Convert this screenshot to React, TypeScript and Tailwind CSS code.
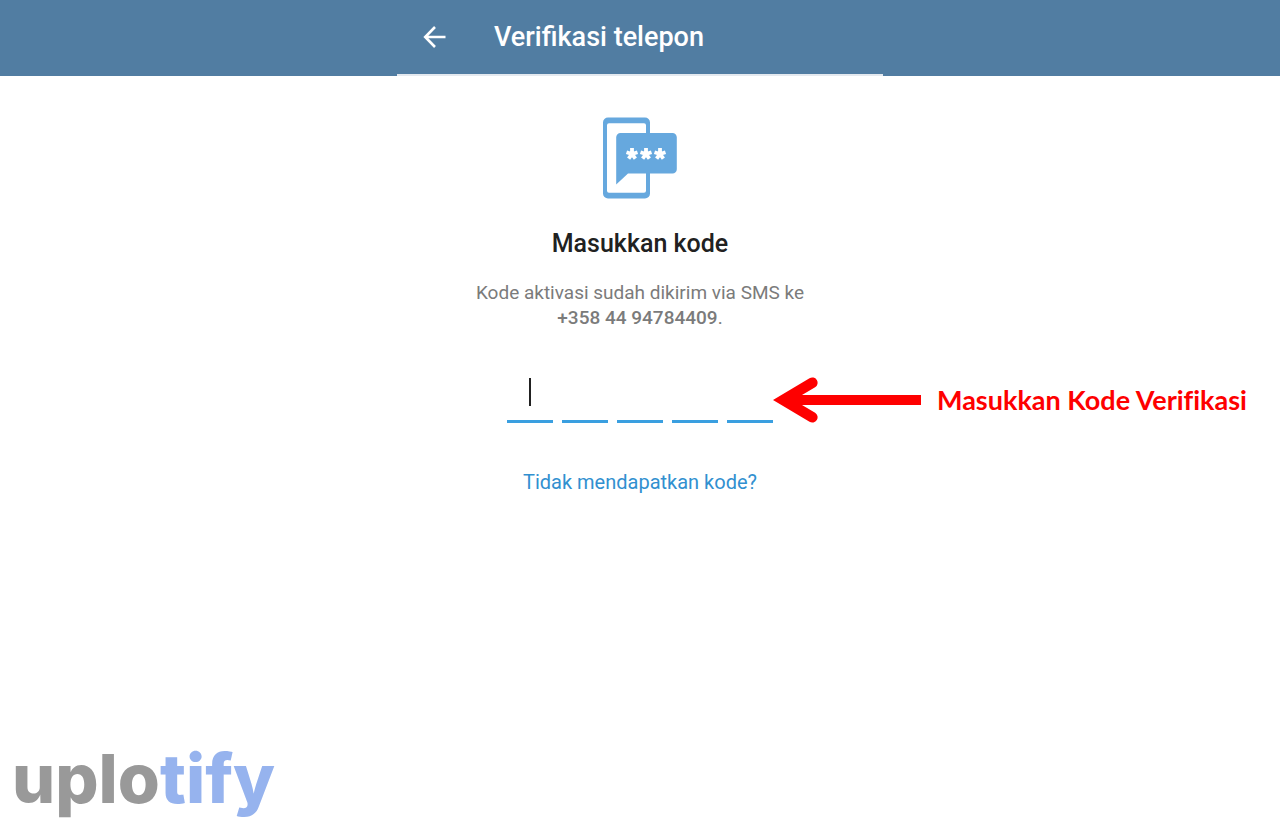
const starCenters = [632, 646, 660];

function BackIcon() {
  return (
    <svg viewBox="0 0 24 24" className="size-6" fill="none" stroke="currentColor" strokeWidth="2.6" aria-hidden="true">
      <path d="M23.500 12H4M13 2 3.200 12l9.800 10" />
    </svg>
  );
}

function PhoneMessageIcon() {
  return (
    <svg viewBox="603 117 74 82" className="h-[82px] w-[74px]" aria-hidden="true">
      <path
        d="M608 117.500h37a5 5 0 0 1 5 5v71a5 5 0 0 1-5 5h-37a5 5 0 0 1-5-5v-71a5 5 0 0 1 5-5Zm1 5.800a2 2 0 0 0-2 2v65.500a2 2 0 0 0 2 2h35a2 2 0 0 0 2-2v-65.500a2 2 0 0 0-2-2Z"
        fill="#66a8de"
        fillRule="evenodd"
      />
      <path d="M620.500 133h52a4.300 4.300 0 0 1 4.300 4.300v32a4.300 4.300 0 0 1-4.300 4.300H628l-11.800 11V137.300a4.300 4.300 0 0 1 4.300-4.300Z" fill="#66a8de" />
      <g stroke="#fff" strokeWidth="3.800">
        {starCenters.map((x) => (
          <path
            key={x}
            d={`M${x} 154v-6M${x} 154l-5.500-1.700M${x} 154l5.500-1.700M${x} 154l-3.400 4.700M${x} 154l3.400 4.700`}
          />
        ))}
      </g>
    </svg>
  );
}

function PointerArrow() {
  return (
    <svg viewBox="0 0 148 46" className="h-[46px] w-[148px] shrink-0" aria-hidden="true">
      <path
        d="M0 23 36.500 1.200a5.300 5.300 0 0 1 5.600 9L29 18h119v10H29l13.100 7.800a5.300 5.300 0 0 1-5.600 9Z"
        fill="#fe0000"
      />
    </svg>
  );
}

export default function App() {
  return (
    <div className="flex min-h-screen flex-col bg-white font-['Roboto',sans-serif]">
      <header className="flex justify-center bg-[#517da2]">
        <div className="flex h-[76px] w-full max-w-[486px] items-center gap-12 border-b-2 border-[#e4e9ef] pl-[25px] text-white">
          <button type="button" aria-label="Kembali">
            <BackIcon />
          </button>
          <h1 className="text-[27px] leading-8 font-medium">Verifikasi telepon</h1>
        </div>
      </header>

      <main className="flex flex-1 flex-col items-center pt-[41px]">
        <PhoneMessageIcon />
        <h2 className="mt-[29px] text-[25px] leading-8 font-medium text-[#212121]">Masukkan kode</h2>
        <p className="mt-5 text-center text-[19px] leading-[25px] text-[#7b7b7b]">
          Kode aktivasi sudah dikirim via SMS ke
          <br />
          <strong className="font-medium">+358 44 94784409</strong>.
        </p>

        <div className="mt-[46px] grid w-full grid-cols-[1fr_auto_1fr] items-center">
          <div role="group" aria-label="Kode verifikasi" className="relative col-start-2 flex gap-[9px]">
            {[1, 2, 3, 4, 5].map((digit) => (
              <input
                key={digit}
                type="text"
                inputMode="numeric"
                maxLength={1}
                aria-label={`Digit ${digit}`}
                className="h-[47px] w-[46px] border-b-3 border-[#3a9fe0] bg-transparent text-center text-2xl text-[#212121] outline-none"
              />
            ))}
            <span className="absolute top-[2px] left-[22px] h-7 w-[2px] bg-[#212121]" />
          </div>
          <div className="flex items-center gap-4 whitespace-nowrap text-[#fe0000]">
            <PointerArrow />
            <span className="font-['Lato',sans-serif] text-[27px] leading-8 font-bold [font-variant-ligatures:none]">
              Masukkan Kode Verifikasi
            </span>
          </div>
        </div>

        <a href="#bantuan" className="mt-[45px] text-[20px] leading-7 text-[#3190d0]">
          Tidak mendapatkan kode?
        </a>
      </main>

      <footer className="px-3 pb-3">
        <p className="font-['Inter',sans-serif] text-[68px] leading-[80px] font-extrabold text-[#999999]">
          uplo<span className="text-[#96b3ee]">tify</span>
        </p>
      </footer>
    </div>
  );
}
